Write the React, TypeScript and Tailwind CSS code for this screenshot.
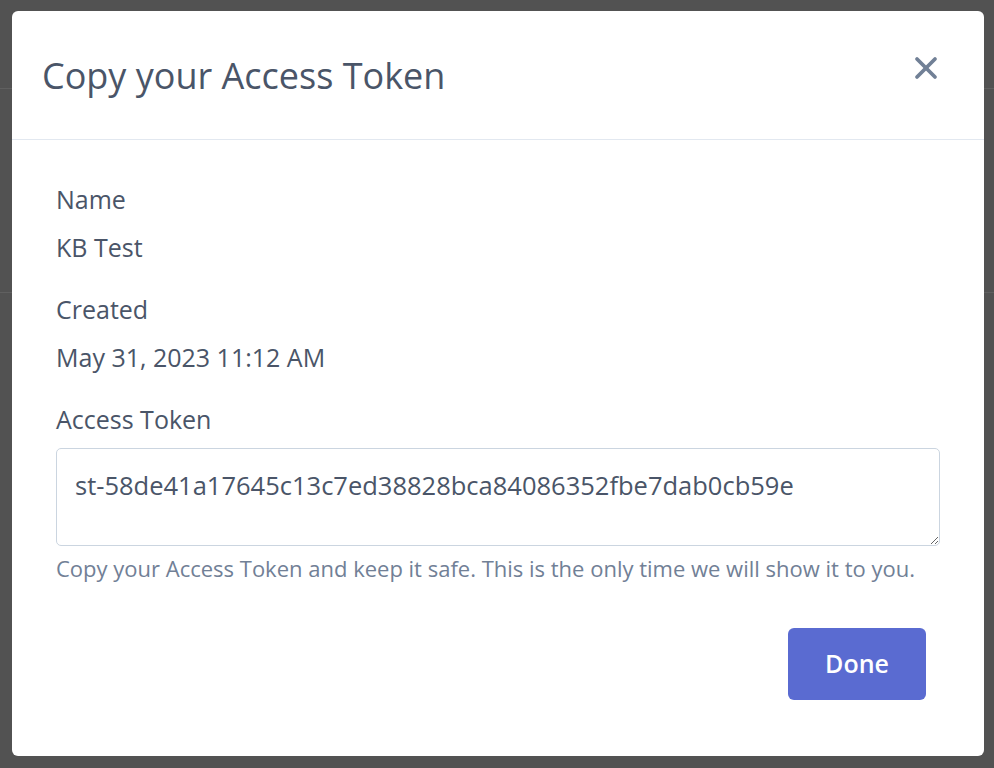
import { X } from 'lucide-react'

const FONT = { fontFamily: '"Open Sans", "Noto Sans", Arial, sans-serif' }

function Field({ label, value }: { label: string; value: string }) {
  return (
    <div className="flex flex-col">
      <div className="text-[25px] leading-[34px] text-[#4a5568]">{label}</div>
      <div className="mt-[14px] text-[25px] leading-[34px] text-[#4a5568]">{value}</div>
    </div>
  )
}

export default function App() {
  return (
    <div className="relative h-[768px] w-full overflow-hidden bg-[#525252]" style={FONT}>
      {/* page behind the overlay */}
      <div className="h-[89px] border-b border-[#606060]" />
      <div className="h-[204px] border-b border-[#606060]" />

      <div className="absolute left-[12px] top-[11px] flex h-[745px] w-[972px] flex-col rounded-[6px] bg-white">
        <div className="flex h-[129px] items-start justify-between border-b border-[#e2e8f0] pl-[30px] pr-[40px]">
          <h2 className="mt-[43px] text-[36px] leading-[44px] text-[#4a5568]">Copy your Access Token</h2>
          <button className="mt-[39px] text-[#718096]">
            <X size={36} strokeWidth={2.5} />
          </button>
        </div>

        <div className="flex flex-col px-[44px] pt-[42px]">
          <Field label="Name" value="KB Test" />
          <div className="mt-[28px]">
            <Field label="Created" value="May 31, 2023 11:12 AM" />
          </div>
          <div className="mt-[28px] text-[25px] leading-[34px] text-[#4a5568]">Access Token</div>
          <textarea
            readOnly
            className="mt-[12px] h-[98px] w-full rounded-[5px] border border-[#cbd5e0] px-[18px] pt-[19px] text-[25.5px] leading-[34px] text-[#4a5568] outline-none"
            defaultValue="st-58de41a17645c13c7ed38828bca84086352fbe7dab0cb59e"
          />
          <p className="mt-[7px] text-[22px] leading-[30px] text-[#718096]">
            Copy your Access Token and keep it safe. This is the only time we will show it to you.
          </p>
          <div className="mt-[45px] flex justify-end pr-[14px]">
            <button className="h-[72px] w-[138px] rounded-[6px] bg-[#5a6bd1] text-[25px] font-semibold text-white">
              Done
            </button>
          </div>
        </div>
      </div>
    </div>
  )
}
